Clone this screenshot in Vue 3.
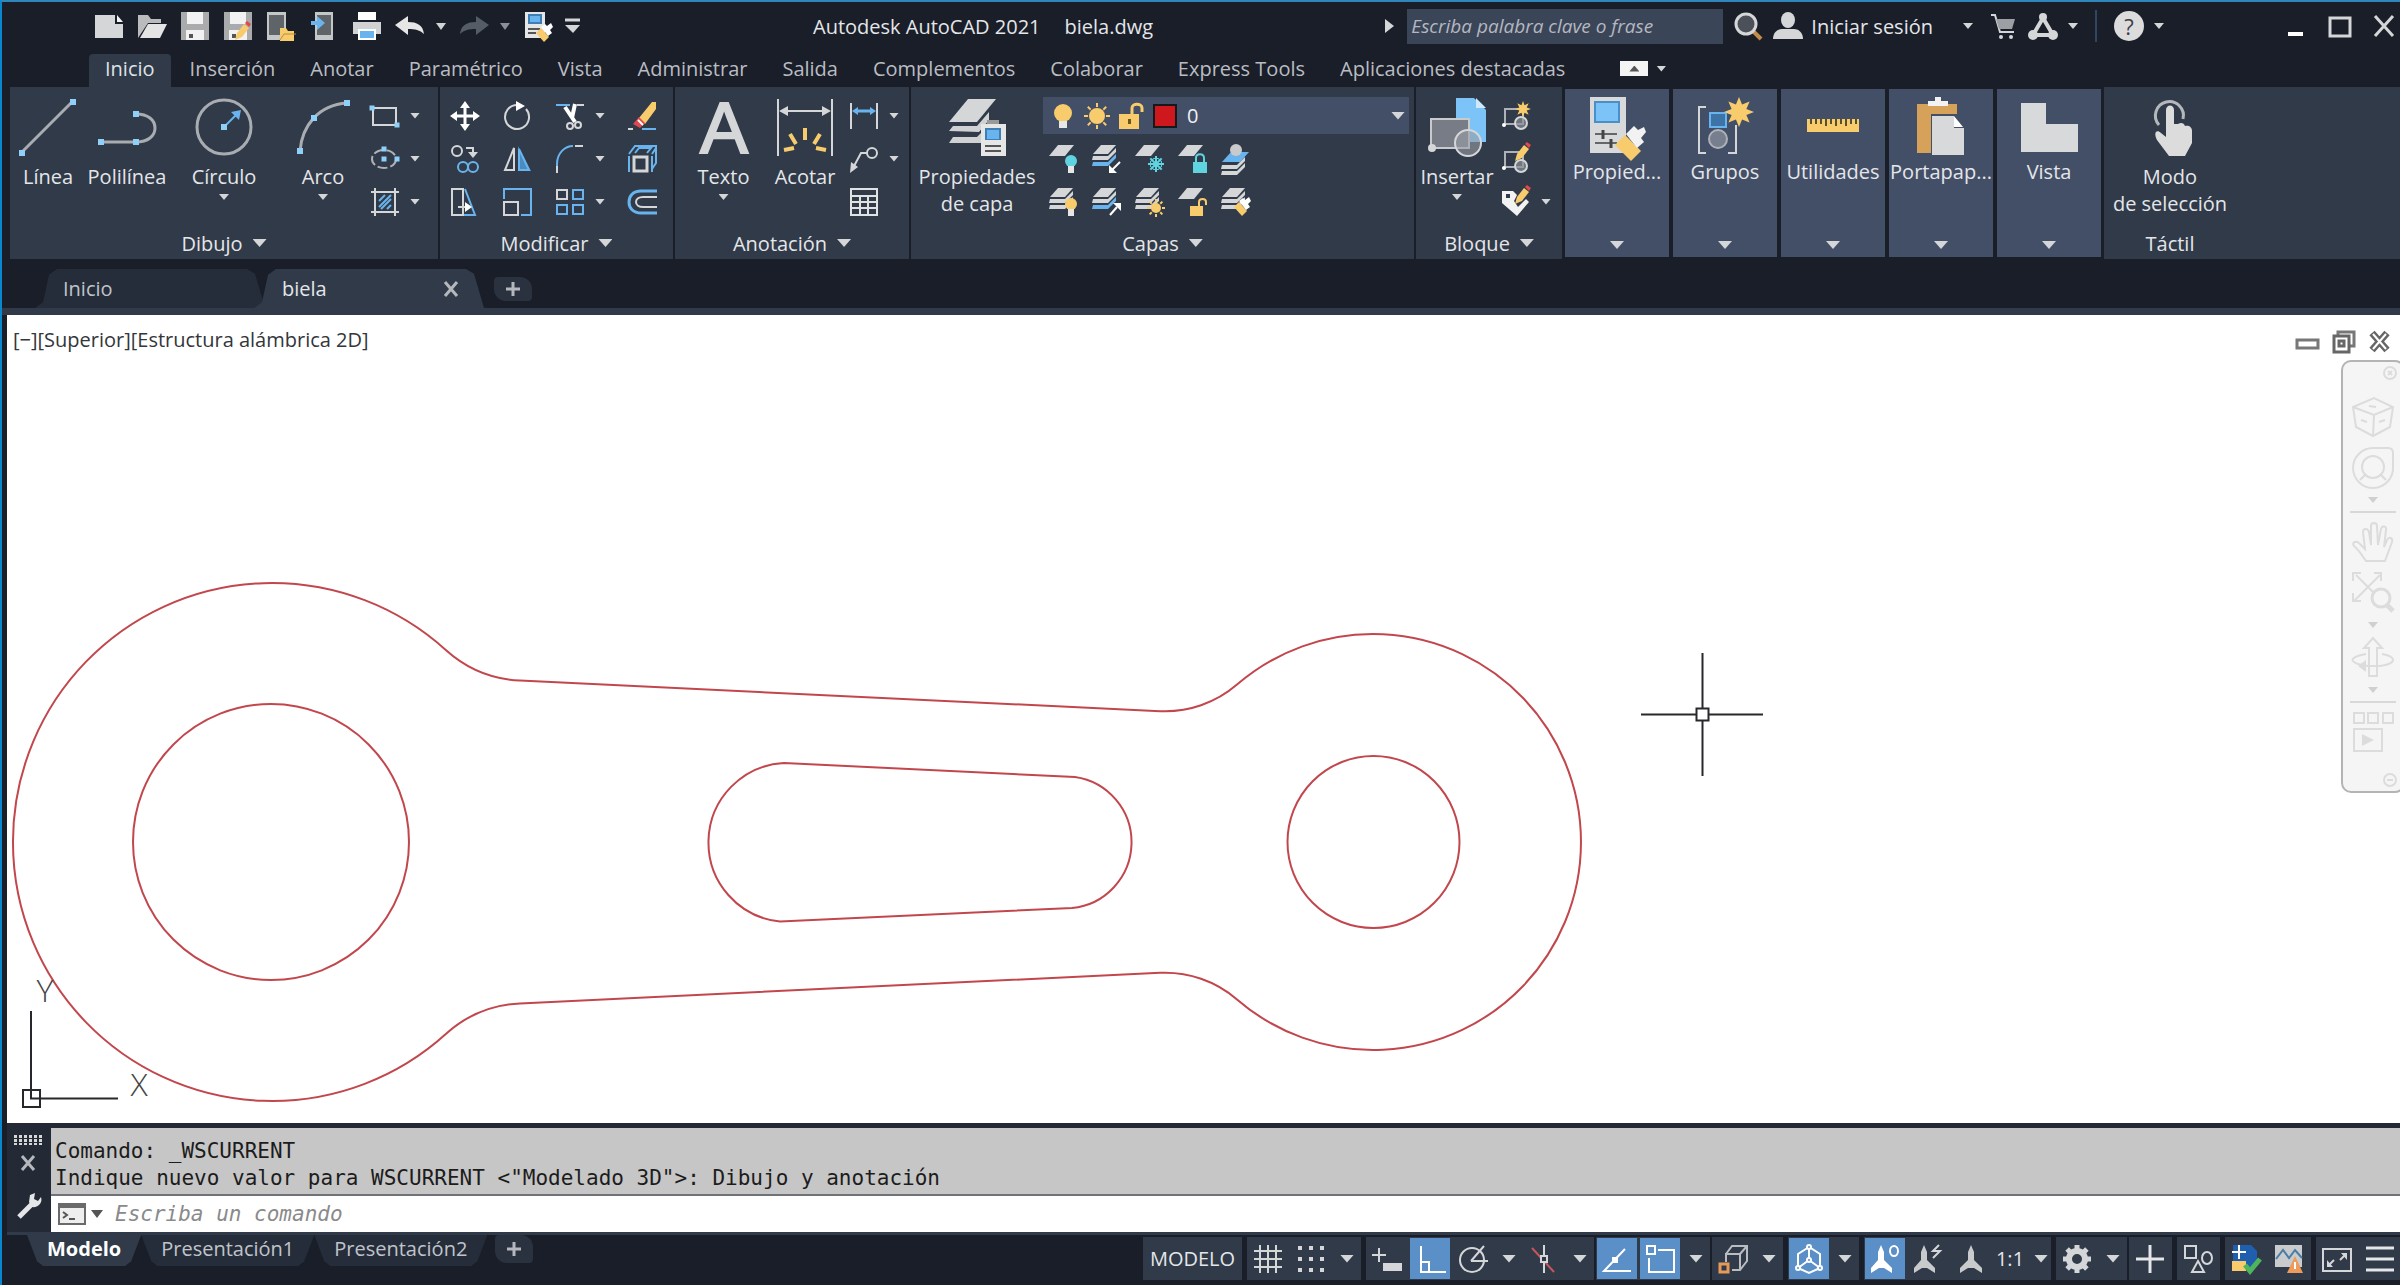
<template>
  <div class="cad">
    <header class="titlebar">
      <div class="qat">
        <button v-for="q in quickAccess" :key="q.icon" :class="q.cls" :aria-label="q.label">
          <Icon :name="q.icon" :size="q.cls === 'menu' ? 14 : 30" />
        </button>
      </div>
      <h1 class="title"><span>Autodesk AutoCAD 2021</span><span>biela.dwg</span></h1>
      <div class="infocenter">
        <Icon name="play" :size="14" />
        <input class="search" type="text" aria-label="Buscar" placeholder="Escriba palabra clave o frase">
        <button aria-label="Buscar ayuda"><Icon name="search" :size="30" /></button>
        <button class="login"><Icon name="user" :size="30" /><span>Iniciar sesión</span><i class="caret"></i></button>
        <button aria-label="Tienda"><Icon name="cart" :size="30" /></button>
        <button class="with-caret" aria-label="Autodesk App Store"><Icon name="apps" :size="30" /><i class="caret"></i></button>
        <span class="divider"></span>
        <button class="with-caret" aria-label="Ayuda"><span class="help">?</span><i class="caret"></i></button>
      </div>
      <div class="window-btns">
        <button aria-label="Minimizar"><Icon name="winMin" :size="24" /></button>
        <button aria-label="Maximizar"><Icon name="winMax" :size="24" /></button>
        <button aria-label="Cerrar"><Icon name="winClose" :size="24" /></button>
      </div>
    </header>

    <nav class="ribbon-tabs">
      <button
        v-for="tab in ribbonTabs"
        :key="tab"
        :class="{ active: tab === activeTab }"
        @click="activeTab = tab"
      >{{ tab }}</button>
      <button class="collapse" aria-label="Minimizar cinta"><span class="collapse-box"></span><i class="caret"></i></button>
    </nav>

    <main class="ribbon">
      <section v-for="p in panels" :key="p.title" :class="['panel', p.cls]">
        <div class="panel-body">
          <button v-for="t in p.big" :key="t.label" class="big-tool">
            <Icon :name="t.icon" :size="58" />
            <span>{{ t.label }}</span>
            <i v-if="t.more" class="caret"></i>
          </button>
          <div v-if="p.small" class="small-tools">
            <button v-for="s in p.small" :key="s" class="small-tool" :aria-label="s">
              <Icon :name="s" :size="30" />
              <i v-if="withMenu.includes(s)" class="caret"></i>
            </button>
          </div>
          <div v-if="p.layers" class="layers">
            <div class="layer-combo">
              <Icon name="bulb" :size="28" />
              <Icon name="sun" :size="28" />
              <Icon name="unlock" :size="28" />
              <span class="swatch"></span>
              <select v-model="layer" aria-label="Capa actual"><option>0</option></select>
              <i class="caret wide"></i>
            </div>
            <div class="layer-tools">
              <button v-for="l in p.layers" :key="l" class="small-tool" :aria-label="l">
                <Icon :name="l" :size="30" />
              </button>
            </div>
          </div>
        </div>
        <h2 class="panel-title">{{ p.title }}<i class="caret wide"></i></h2>
      </section>

      <button v-for="c in collapsed" :key="c.label" class="folded">
        <Icon :name="c.icon" :size="58" />
        <span>{{ c.label }}</span>
        <i class="caret wide"></i>
      </button>

      <section class="panel touch">
        <div class="panel-body">
          <button class="big-tool">
            <Icon name="hand" :size="58" />
            <span>Modo<br>de selección</span>
          </button>
        </div>
        <h2 class="panel-title">Táctil</h2>
      </section>
    </main>

    <div class="file-tabs">
      <button class="file-tab">Inicio</button>
      <button class="file-tab current">biela<Icon name="close" :size="16" /></button>
      <button class="new-tab" aria-label="Nuevo dibujo"><Icon name="plus" :size="16" /></button>
    </div>

    <section class="canvas">
      <svg class="drawing" viewBox="7 315 2393 808" preserveAspectRatio="xMinYMin meet">
        <g class="part">
          <path d="M445.8 650A119 119 0 0 0 520 680.6L1160 711.2A110 110 0 0 0 1237 684.6A208 208 0 1 1 1237 999.4A110 110 0 0 0 1160 972.8L520 1003.4A119 119 0 0 0 445.8 1034A259 259 0 1 1 445.8 650Z" />
          <circle cx="271" cy="842" r="138" />
          <circle cx="1373.500" cy="842" r="86" />
          <path d="M784 763L1075 777A66 66 0 0 1 1072 908L780 921.500A79.500 79.500 0 0 1 784 763Z" />
        </g>
        <g class="ucs">
          <path d="M31 1011V1098.500H118M23 1090h17v17h-17z" />
          <text x="45" y="1002">Y</text>
          <text x="139" y="1096">X</text>
        </g>
        <g class="cross">
          <path d="M1641 714.500H1696M1708 714.500H1763M1702.500 653V708M1702.500 720V776M1696.500 708.500h12v12h-12z" />
        </g>
      </svg>
      <p class="viewport-label">[−][Superior][Estructura alámbrica 2D]</p>
      <div class="viewport-btns">
        <button aria-label="Minimizar vista"><Icon name="vpMin" :size="24" /></button>
        <button aria-label="Restaurar vista"><Icon name="vpMax" :size="24" /></button>
        <button aria-label="Cerrar vista"><Icon name="vpClose" :size="24" /></button>
      </div>
      <div class="navbar">
        <Icon class="nav-corner" name="navX" :size="14" />
        <button aria-label="ViewCube"><Icon name="navCube" :size="42" /></button>
        <button aria-label="Rueda de navegación"><Icon name="navWheel" :size="42" /><i class="caret"></i></button>
        <hr>
        <button aria-label="Encuadre"><Icon name="navPan" :size="42" /></button>
        <button aria-label="Zoom"><Icon name="navZoom" :size="42" /><i class="caret"></i></button>
        <button aria-label="Órbita"><Icon name="navOrbit" :size="42" /><i class="caret"></i></button>
        <hr>
        <button aria-label="ShowMotion"><Icon name="navMotion" :size="42" /></button>
        <Icon class="nav-corner last" name="navMinus" :size="14" />
      </div>
    </section>

    <section class="command">
      <div class="command-side">
        <span class="grip"></span>
        <button aria-label="Cerrar línea de comandos"><Icon name="close" :size="18" /></button>
        <button aria-label="Personalizar"><Icon name="wrench" :size="26" /></button>
      </div>
      <div class="command-main">
        <div class="history">
          <p>Comando: _WSCURRENT</p>
          <p>Indique nuevo valor para WSCURRENT &lt;"Modelado 3D"&gt;: Dibujo y anotación</p>
        </div>
        <label class="prompt">
          <Icon name="prompt" :size="28" />
          <i class="caret"></i>
          <input v-model="command" type="text" aria-label="Comando" placeholder="Escriba un comando">
        </label>
      </div>
    </section>

    <footer class="statusbar">
      <div class="layout-tabs">
        <button class="layout-tab current">Modelo</button>
        <button class="layout-tab">Presentación1</button>
        <button class="layout-tab">Presentación2</button>
        <button class="layout-add" aria-label="Nueva presentación"><Icon name="plus" :size="16" /></button>
      </div>
      <div class="status-groups">
        <div class="group"><button class="space">MODELO</button></div>
        <div v-for="(g, i) in statusGroups" :key="i" :class="['group', { tight: g.tight }]">
          <template v-for="s in g.items" :key="s">
            <button v-if="s.startsWith('menu')" class="drop" aria-label="Opciones"><i class="caret"></i></button>
            <button v-else-if="s === 'scale'" class="scale">1:1<i class="caret"></i></button>
            <button v-else :class="['cell', { on: enabled.includes(s) }]" :aria-label="s"><Icon :name="s" :size="30" /></button>
          </template>
        </div>
      </div>
    </footer>
  </div>
</template>

<script setup>
import { ref, h } from "vue";

const G = "#d4d6d8";
const B = "#69b4ee";
const Y = "#f8cb6c";
const R = "#e0484e";
const C = "#5fd3e0";

// Nodo azul de los iconos de dibujo
const dot = (x, y, s = 6) => `<rect x="${x - s / 2}" y="${y - s / 2}" width="${s}" height="${s}" fill="#8fd0f8"/>`;
const line = (d, c = G, w = 2) => `<path d="${d}" fill="none" stroke="${c}" stroke-width="${w}"/>`;
const fill = (d, c = G) => `<path d="${d}" fill="${c}"/>`;
const sheet = (y, c = G) => fill(`M9 ${y}h16l-9 11H0z`, c);
const stripe = (y, c = G) => fill(`M1 ${y}h15l8-8v4l-8 8H0z`, c);
const stack = (c = G) => fill("M9 1h15l-8 9H1z") + stripe(12) + stripe(18, c);
const brush = (x, y) => fill(`M${x} ${y}l5-5 8 9-5 5z`, Y) + fill(`M${x + 5} ${y - 6}l4-3 2 2 4-3 2 4-3 3 2 3-4 3z`, "#fff");
const pencil = (x, y) => fill(`M${x} ${y}l2-7 7-9 5 4-7 9z`, Y) + fill(`M${x + 10} ${y - 17}l2-2 4 3-2 3z`, R);
const rays = (cx, cy, r1, r2, c = Y, w = 2) => {
  let d = "";
  for (let i = 0; i < 8; i++) {
    const a = (i * Math.PI) / 4;
    d += `M${cx + r1 * Math.cos(a)} ${cy + r1 * Math.sin(a)}L${cx + r2 * Math.cos(a)} ${cy + r2 * Math.sin(a)}`;
  }
  return line(d, c, w);
};
const star = (cx, cy, r1, r2, n = 8) => {
  const pts = [];
  for (let i = 0; i < n * 2; i++) {
    const r = i % 2 ? r2 : r1;
    const a = (i * Math.PI) / n - Math.PI / 2;
    pts.push(`${cx + r * Math.cos(a)} ${cy + r * Math.sin(a)}`);
  }
  return fill(`M${pts.join("L")}Z`, Y);
};
const block = line("M4 8h18v15H4z", "#aeb2b8", 2) + `<circle cx="20" cy="22" r="6" fill="#8b9097" fill-opacity=".7" stroke="${G}" stroke-width="2"/><circle cx="3" cy="24" r="2" fill="#fff"/>`;
const floppy = fill("M1 1h28v28H1z", "#a9abad") + fill("M7 1h16v12H7zM6 19h18v10H6z", "#f2f2f2") + fill("M9 23h4v4H9z", "#555");
const person = (c) => fill("M15 1l3 7v8l8 8v5l-8-5h-6l-8 5v-5l8-8V8z", c);
const P = "#dcdcdc";

const icons = {
  new: fill("M1 4h20v9h8v14H1z") + fill("M23 4l6 7h-6z", "#f4f4f4"),
  open: fill("M1 4h10l3 4h10v4H11L1 27z", "#b9bbbd") + fill("M11 13h19l-7 14H3z", "#e4e4e4"),
  save: floppy,
  saveAs: floppy + pencil(12, 29),
  webOpen: fill("M1 1h19v28H1z", "#c4c6c8") + fill("M3 4h15v20H3z", "#5f6469") + fill("M14 17h6l2 3h6v10H14z", Y) + line("M14 29l4-6h12", "#b98f3a", 1),
  webSave: fill("M6 1h18v28H6z", "#c4c6c8") + fill("M8 4h14v20H8z", "#5f6469") + fill("M2 10h6V5l8 7-8 7v-5H2z", B),
  print: fill("M6 1h18v8H6z", "#fff") + fill("M1 11h28v12H1z", "#d0d2d4") + fill("M6 18h18v11H6z", "#fff") + fill("M8 20h14v7H8z", B),
  undo: fill("M0 14L13 5v6c9 0 15 3 16 12-4-4-9-5-16-5v6z", "#e6e6e6"),
  redo: fill("M30 14L17 5v6c-9 0-15 3-16 12 4-4 9-5 16-5v6z", "#555c66"),
  menuA: fill("M2 4h10l-5 7z", "#d0d2d4"),
  menuB: fill("M2 4h10l-5 7z", "#8b9097"),
  match: fill("M2 1h20v26H2z", "#e6e6e6") + fill("M5 3h14v10H5z", "#3d7fb5") + fill("M7 5h10v6H7z", B) + line("M5 18h12M5 22h8", "#555", 2) + brush(13, 22),
  custom: line("M8 9h15", G, 3) + fill("M8 14h15l-7 8z"),
  play: fill("M2 0l9 7-9 7z"),
  search: line("M20 20l8 8", "#c48c4a", 4) + `<circle cx="13" cy="13" r="10" fill="#4b5059" stroke="${G}" stroke-width="3"/>`,
  user: `<ellipse cx="15" cy="9" rx="7" ry="8" fill="${G}"/>` + fill("M0 28c0-7 5-10 9-10h12c4 0 9 3 9 10z"),
  cart: line("M3 4h4l5 17h14", G, 2) + fill("M8 8h19l-3 10H11z", "#9c9fa3") + `<circle cx="13" cy="26" r="2" fill="${G}"/><circle cx="23" cy="26" r="2" fill="${G}"/>`,
  apps: line("M15 7L5 24h20z", G, 4) + `<circle cx="15" cy="6" r="4" fill="${G}"/><circle cx="5" cy="24" r="5" fill="${G}"/><circle cx="25" cy="24" r="5" fill="${G}"/>`,
  winMin: line("M4 20h15", "#fff", 4),
  winMax: line("M2 4h20v18H2z", G, 3),
  winClose: line("M3 2l18 20M21 2L3 22", G, 3),

  line: line("M3 54L53 4", "#a9adb2", 3) + dot(3, 55) + dot(54, 4),
  polyline: line("M3 44h35c12 0 19-6 19-14s-7-14-19-14", "#a9adb2", 3) + dot(3, 44) + dot(38, 44) + dot(38, 16),
  circle: `<circle cx="29" cy="29" r="27" fill="none" stroke="#a9adb2" stroke-width="3"/>` + line("M29 29L43 15", B, 2) + fill("M46 12l-2 10-8-8z", B) + dot(29, 29),
  arc: line("M6 53C8 28 24 7 53 5", "#a9adb2", 3) + dot(6, 53) + dot(20, 20) + dot(53, 5),
  rect: line("M3 7h23v17H3z") + dot(2, 7, 5) + dot(27, 24, 5),
  ellipse: `<ellipse cx="14" cy="15" rx="12" ry="9" fill="none" stroke="#aeb2b8" stroke-width="2" stroke-dasharray="10 3"/>` + dot(14, 5, 5) + dot(14, 15, 5) + dot(27, 15, 5),
  hatch: line("M5 1v28M25 1v28M1 5h28M1 25h28") + line("M9 14l6-6M9 20L21 8M11 22l10-10M17 22l4-4", B, 2),

  move: line("M15 4v22M4 15h22", "#fff", 3) + fill("M15 0l5 7H10zM15 30l5-7H10zM0 15l7-5v10zM30 15l-7-5v10z", "#fff"),
  rotate: line("M24 8a12 12 0 1 1-9-4", G, 2) + fill("M14 0l9 5-9 5z", "#fff"),
  trim: line("M1 4h14", B, 2) + line("M22 4h7") + line("M10 6l10 15M20 3l-3 14", "#fff", 4) + `<circle cx="15" cy="25" r="3" fill="none" stroke="${G}" stroke-width="2"/><circle cx="23" cy="24" r="3" fill="none" stroke="${G}" stroke-width="2"/>`,
  erase: fill("M12 17L25 1h4v7L18 23z", Y) + fill("M12 16l6 6-5 5-7-4z", R) + line("M11 19l5 5", "#fff", 2) + line("M1 28h5") + line("M15 28h14", B),
  copy: `<circle cx="7" cy="7" r="5" fill="none" stroke="${G}" stroke-width="2"/>` + line("M16 4h7v7") + fill("M18 8h10l-5 6z") + `<g fill="none" stroke="${B}" stroke-width="2"><circle cx="13" cy="23" r="5"/><circle cx="23" cy="23" r="5"/></g>`,
  mirror: line("M12 4v22H3z") + fill("M16 2l13 25H16z", "#4a8cc0") + line("M17 5l10 21H17z", B),
  fillet: line("M2 22v7M20 2h8") + line("M2 22V20C2 9 10 2 18 2", B, 2),
  explode: line("M7 13h13v14H7z", G, 3) + line("M2 12v16M25 12v16M2 10l6-8h21v17l-4 6M8 9l4-5h12l-4 5M25 10l4-6", B, 2),
  stretch: line("M2 2h11v26H2z") + line("M15 2l10 26H14", B) + line("M8 20h10") + fill("M15 15l7 5-7 5z", "#fff"),
  scaleTool: line("M2 15h14v13H2z") + line("M2 12V2h27v26H19", B),
  array: line("M2 3h10v9H2z") + line("M18 3h10v9H18zM2 18h10v9H2zM18 18h10v9H18z", B),
  offset: line("M30 4H14C6 4 2 9 2 15s4 11 12 11h16", B, 3) + line("M30 10H16c-4 0-7 2-7 5s3 5 7 5h14"),

  text: `<text x="29" y="55" text-anchor="middle" font-size="72" font-family="Liberation Sans, sans-serif" fill="${G}" stroke="${G}" stroke-width="2">A</text>`,
  dim: line("M2 1v57M56 1v57", G, 2) + line("M8 13h42") + fill("M3 13l9-5v10zM55 13l-9-5v10z") + line("M29 30v12M14 36l6 10M44 36l-6 10M8 52l10-2M50 52l-10-2", Y, 4),
  linear: line("M2 2v26M28 2v26") + line("M6 10h18", B, 3) + fill("M3 10l6-4v8zM27 10l-6-4v8z", B),
  leader: `<circle cx="23" cy="9" r="5" fill="none" stroke="${G}" stroke-width="2"/>` + line("M18 9h-6L4 24") + fill("M1 29l1-11 7 5z"),
  table: line("M2 2h26v26H2zM2 9h26M2 15h26M2 21h26M11 9v19M19 9v19", "#e0e2e4", 2),

  layerProps: fill("M20 1h28L29 24H1z") + fill("M1 33l4-5h24l12-14v8L31 34zM1 45l4-6h24l4-4v10z", "#cfd1d3") + fill("M33 26h25v32H33z", "#e6e6e6") + fill("M37 30h16v12H37z", "#3d7fb5") + fill("M39 32h12v9H39z", B) + line("M37 48h16M37 53h16", "#555", 2) + fill("M39 22h12v4H39z", "#999"),
  layOff: sheet(1) + `<circle cx="22" cy="17" r="6" fill="${C}"/>` + fill("M19 22h6v7h-6z", "#e6e6e6"),
  layIso: stack(B) + line("M28 18l-8 8", "#fff", 2) + fill("M17 29v-8l8 8z", "#fff"),
  layFreeze: sheet(1) + rays(21, 20, 0, 8, C, 2) + rays(21, 20, 5, 6, C, 5),
  layLock: sheet(1) + fill("M15 18h14v11H15z", C) + line("M18 18v-4c0-5 8-5 8 0v4", C, 2),
  layCurrent: fill("M10 8h18L19 18H1z", B) + stripe(21) + stripe(27) + `<circle cx="15" cy="6" r="6" fill="#c8cacc"/>`,
  layOn: stack() + `<circle cx="22" cy="17" r="6" fill="${Y}"/>` + fill("M19 22h6v7h-6z", "#e6e6e6"),
  layUniso: stack(B) + line("M18 28l7-8", "#fff", 2) + fill("M29 16v8l-8-8z", "#fff"),
  layThaw: stack() + `<circle cx="21" cy="21" r="5" fill="${Y}"/>` + rays(21, 21, 6, 9),
  layUnlock: sheet(1) + fill("M12 19h13v10H12z", Y) + line("M21 19v-4c0-4 7-4 7 0v3", Y, 2),
  layMatch: stack() + brush(13, 20),
  bulb: `<circle cx="14" cy="11" r="9" fill="${Y}"/>` + fill("M10 19h8v7h-8z", "#e6e6e6"),
  sun: `<circle cx="14" cy="14" r="8" fill="${Y}"/>` + rays(14, 14, 9, 13),
  unlock: fill("M2 12h20v15H2z", Y) + line("M15 12V6c0-5 10-5 10 0v4", Y, 3) + fill("M11 17h3v5h-3z", "#6b5520"),

  insert: fill("M28 0h18l12 12v32H28z", "#7cc4f8") + fill("M48 0l10 10H48z", "#cfe8fb") + fill("M3 21h38v29H3z", "#777c86") + line("M3 21h38v29H3z", "#c8cacc", 2) + `<circle cx="40" cy="45" r="13" fill="#9a9fa6" fill-opacity=".6" stroke="${G}" stroke-width="2"/><circle cx="4" cy="50" r="4" fill="#d4d6d8"/>`,
  blockNew: block + star(22, 8, 8, 4),
  blockEdit: block + pencil(14, 17),
  attrEdit: fill("M1 4h11l4 4-3 6 4 6 8-8 3 3-12 14L1 16z", "#f2f2f2") + fill("M5 7h4v4H5z", "#303a48") + pencil(14, 17),

  props: fill("M2 0h36v56H2z", "#d8d9da") + fill("M6 4h26v22H6z", "#4a90c8") + fill("M8 6h22v18H8z", "#7cc4f8") + line("M7 37h22M7 46h22", "#666", 2) + line("M15 33v9M23 42v9", "#444", 3) + fill("M27 48l10-10 16 16-10 10z", Y) + fill("M38 37l8-8 4 4 6-3 2 5-5 6 3 4-7 6z", "#f2f2f2"),
  groups: line("M10 10H3v46h7M32 56h8V28", G, 2) + fill("M14 16h16v14H14z", "#3d73a5") + line("M14 16h16v14H14z", B, 2) + `<circle cx="22" cy="42" r="9" fill="#777f8f" stroke="#aeb2b8" stroke-width="2"/>` + star(43, 15, 15, 8),
  ruler: fill("M3 22h52v13H3z", Y) + line("M7 22v5M12 22v5M17 22v5M22 22v7M27 22v5M32 22v7M37 22v5M42 22v7M47 22v5M52 22v5", "#55512f", 2),
  clipboard: fill("M5 7h40v49H5z", "#d6a159") + fill("M19 17h30v41H19z", "#434f67") + fill("M20 19h22v12h10v27H20z", "#d8d9da") + fill("M42 19l9 11h-9z", "#fff") + fill("M16 4h7V0h6v4h7v5H16z", "#f2f2f2"),
  view: fill("M1 6h25v21h32v28H1z", "#d8d9da"),
  hand: line("M18 27a14 14 0 1 1 24-6", "#b4b8bc", 3) + fill("M25 12c0-6 8-6 8 0v14h4c3-2 6-1 7 2 4-1 7 1 7 5v12l-7 13H28L16 42c-4-8 0-11 4-7l5 4z", "#dcdcdc"),

  close: line("M2 1l12 14M14 1L2 15", "#b4b8bd", 3),
  plus: line("M8 1v14M1 8h14", "#b4b8bd", 3),

  vpMin: line("M1 10h21v8H1z", "#777", 3),
  vpMax: line("M6 5V2h16v14h-4", "#777", 3) + line("M2 6h15v16H2zM7 11h5v5H7z", "#666", 3),
  vpClose: line("M4 3l15 17M19 3L4 20", "#666", 7) + line("M5 4l13 15M18 4L5 19", "#fff", 2),
  navX: `<circle cx="7" cy="7" r="6" fill="none" stroke="${P}" stroke-width="2"/>` + line("M5 5l4 4M9 5l-4 4", P),
  navMinus: `<circle cx="7" cy="7" r="6" fill="none" stroke="${P}" stroke-width="2"/>` + line("M4 7h6", P),
  navCube: line("M1 11L22 2l19 9-3 20-17 9L4 31zM1 11l21 8 19-8M22 19l-1 21M17 10l7 1M9 24l6 2M27 26l6-2", P, 2),
  navWheel: line("M21 2h15q5 0 5 5v14a20 20 0 1 1-20-19zM8 34l6-6M34 34l-6-6", P, 2) + `<circle cx="21" cy="21" r="11" fill="none" stroke="${P}" stroke-width="2"/>`,
  navPan: line("M14 40C10 34 6 28 2 25c-3-4 3-6 6-2l5 5-2-17c0-4 5-4 6 0l2 13V5c0-4 6-4 6 0l1 19 3-16c1-4 6-3 5 1l-2 17 3-7c2-4 6-2 5 2l-7 19z", P, 2),
  navZoom: line("M4 4l24 24M28 4L2 30M1 10V2h8M22 2h7v8M1 22v8h8", P, 2) + `<circle cx="29" cy="27" r="9" fill="#f5f5f5" stroke="${P}" stroke-width="3"/>` + line("M35 34l6 6", P, 5),
  navOrbit: line("M17 40V12h-5l9-10 9 10h-5v28zM14 18C-8 22 0 28 16 30h12c20-3 14-10 2-12", P, 2) + fill("M6 30l8-6v12z", P),
  navMotion: line("M2 2h10v10H2zM16 2h10v10H16zM31 2h10v10H31zM2 18h28v22H2z", P, 2) + fill("M10 23l12 6-12 6z", P),

  wrench: line("M3 24l13-13", "#e4e6e8", 5) + fill("M13 9l1-7 5-2-1 6 4 2 3-4c2 6-3 11-9 10z", "#e4e6e8"),
  prompt: fill("M0 3h28v22H0z", "#6a6a6a") + fill("M2 8h24v15H2z", "#eee") + line("M5 12l4 3-4 3M11 19h6", "#555", 2),

  grid: line("M7 1v28M15 1v28M23 1v28M1 7h28M1 15h28M1 23h28"),
  snap: [4, 15, 26].map((y) => [4, 15, 26].map((x) => `<rect x="${x - 2}" y="${y - 2}" width="4" height="4" fill="${G}"/>`).join("")).join(""),
  infer: line("M7 4v14M0 11h14") + fill("M11 19h19v8H11z"),
  ortho: line("M6 2v26h25M6 18h8v9", "#fff", 2),
  polar: `<circle cx="14" cy="16" r="12" fill="none" stroke="${G}" stroke-width="2"/>` + line("M13 17L26 2M13 17h17"),
  iso: line("M3 4l22 24", "#c6565e", 2) + line("M15 1v28") + `<rect x="12" y="12" width="6" height="6" fill="#303a48" stroke="${G}" stroke-width="2"/>`,
  track: line("M23 5L2 27h27", "#fff", 2) + `<rect x="10" y="13" width="6" height="6" fill="#fff"/>`,
  osnap: line("M2 2h8v8H2zM13 6h16v22H4V14", "#fff", 2),
  cube3d: line("M8 10L14 2h15v15l-7 9h-8M8 18v-8h14v16M22 10l7-8", "#b9bdc2") + line("M2 20h8v8H2z", "#e69a58", 3),
  isoObj: line("M15 3L4 10v14l11 5 11-5V10zM15 3v13L4 24M15 16l11 8", "#fff", 2) + [[15, 3], [4, 24], [26, 24], [15, 16]].map(([x, y]) => `<circle cx="${x}" cy="${y}" r="2" fill="#5a8fc7" stroke="#fff" stroke-width="2"/>`).join(""),
  annoVis: fill("M11 1l3 7v8l8 8v5l-8-5H9l-8 5v-5l7-8V8z", "#fff") + `<ellipse cx="24" cy="7" rx="4" ry="5" fill="none" stroke="#fff" stroke-width="2"/>`,
  annoAuto: fill("M11 1l3 7v8l8 8v5l-8-5H9l-8 5v-5l7-8V8z", "#c8cacc") + line("M26 1l-6 6h7l-7 7", G, 2),
  anno: person("#c8cacc"),
  gear: `<circle cx="15" cy="15" r="8" fill="none" stroke="${G}" stroke-width="6"/>` + rays(15, 15, 9, 14, G, 5),
  add: line("M15 1v28M1 15h28", "#e4e6e8", 3),
  shapes: line("M2 2h11v12H2zM9 28l6-11 6 11z") + `<ellipse cx="24" cy="14" rx="5" ry="6" fill="none" stroke="${G}" stroke-width="2"/>`,
  license: fill("M2 1h18l6 6v16H2z", "#1f5fae") + line("M8 1v14M1 8h14", "#fff") + fill("M1 17h14v10H1z", Y) + line("M14 21l5 6L29 15", "#4fb45c", 5),
  perf: fill("M1 1h27v22H1z", "#c9cbcd") + line("M2 15l7-9 6 8 6-8 7 8", "#4a7da5", 2) + fill("M21 12l8 17H13z", "#ee9a5a") + fill("M20 18h2v7h-2z", "#fff"),
  full: line("M1 5h28v22H1z") + line("M6 22l6-6M24 10l-6 6") + fill("M5 23v-7l6 7zM25 9v7l-6-7z"),
  burger: line("M1 4h28M1 15h28M1 26h28", "#e4e6e8", 3),
};

const Icon = (props) =>
  h("svg", {
    viewBox: `0 0 ${props.size} ${props.size}`,
    width: props.size,
    height: props.size,
    "aria-hidden": "true",
    innerHTML: icons[props.name],
  });
Icon.props = ["name", "size"];

const activeTab = ref("Inicio");
const layer = ref("0");
const command = ref("");

const quickAccess = [
  { icon: "new", label: "Nuevo" },
  { icon: "open", label: "Abrir" },
  { icon: "save", label: "Guardar" },
  { icon: "saveAs", label: "Guardar como" },
  { icon: "webOpen", label: "Abrir desde web" },
  { icon: "webSave", label: "Guardar en web" },
  { icon: "print", label: "Trazar" },
  { icon: "undo", label: "Deshacer" },
  { icon: "menuA", label: "Historial deshacer", cls: "menu" },
  { icon: "redo", label: "Rehacer" },
  { icon: "menuB", label: "Historial rehacer", cls: "menu" },
  { icon: "match", label: "Igualar propiedades" },
  { icon: "custom", label: "Personalizar", cls: "custom" },
];

const ribbonTabs = [
  "Inicio", "Inserción", "Anotar", "Paramétrico", "Vista", "Administrar", "Salida",
  "Complementos", "Colaborar", "Express Tools", "Aplicaciones destacadas",
];

// Herramientas pequeñas que llevan menú desplegable
const withMenu = ["rect", "ellipse", "hatch", "trim", "fillet", "array", "linear", "leader", "attrEdit"];

const panels = [
  {
    title: "Dibujo",
    cls: "draw",
    big: [
      { icon: "line", label: "Línea" },
      { icon: "polyline", label: "Polilínea" },
      { icon: "circle", label: "Círculo", more: true },
      { icon: "arc", label: "Arco", more: true },
    ],
    small: ["rect", "ellipse", "hatch"],
  },
  {
    title: "Modificar",
    cls: "modify",
    small: ["move", "rotate", "trim", "erase", "copy", "mirror", "fillet", "explode", "stretch", "scaleTool", "array", "offset"],
  },
  {
    title: "Anotación",
    cls: "annotate",
    big: [
      { icon: "text", label: "Texto", more: true },
      { icon: "dim", label: "Acotar" },
    ],
    small: ["linear", "leader", "table"],
  },
  {
    title: "Capas",
    cls: "layer-panel",
    big: [{ icon: "layerProps", label: "Propiedades de capa" }],
    layers: ["layOff", "layIso", "layFreeze", "layLock", "layCurrent", "layOn", "layUniso", "layThaw", "layUnlock", "layMatch"],
  },
  {
    title: "Bloque",
    cls: "block",
    big: [{ icon: "insert", label: "Insertar", more: true }],
    small: ["blockNew", "blockEdit", "attrEdit"],
  },
];

const collapsed = [
  { icon: "props", label: "Propied..." },
  { icon: "groups", label: "Grupos" },
  { icon: "ruler", label: "Utilidades" },
  { icon: "clipboard", label: "Portapap..." },
  { icon: "view", label: "Vista" },
];

const enabled = ["ortho", "track", "osnap", "isoObj", "annoVis"];
const statusGroups = [
  { items: ["grid", "snap", "menu1"] },
  { items: ["infer", "ortho", "polar", "menu1", "iso", "menu2"] },
  { items: ["track", "osnap", "menu1"], tight: true },
  { items: ["cube3d", "menu1"], tight: true },
  { items: ["isoObj", "menu1"] },
  { items: ["annoVis", "annoAuto", "anno", "scale"] },
  { items: ["gear", "menu1"] },
  { items: ["add"], tight: true },
  { items: ["shapes"] },
  { items: ["license", "perf"] },
  { items: ["full", "burger"] },
];
</script>

<style>
body{
  background:#191e28;
}
</style>

<style scoped>
.cad{
  min-height:100vh;
  box-sizing:border-box;
  display:flex;
  flex-direction:column;
  border-top:2px solid #2f86bb;
  border-left:2px solid #0a86cf;
  background:#191e28;
  color:#e4e6e9;
  font-family:"Open Sans","Noto Sans",sans-serif;
  font-size:20px;
  line-height:27px;
  overflow:hidden;
}
button{
  display:flex;
  align-items:center;
  padding:0;
  border:0;
  background:none;
  color:inherit;
  font:inherit;
  white-space:nowrap;
}
input,select{
  box-sizing:border-box;
  border:0;
  outline:0;
  font:inherit;
}
h1,h2,p{
  margin:0;
  font-size:20px;
  font-weight:400;
}
svg{
  display:block;
  flex:none;
  overflow:visible;
}
.caret{
  flex:none;
  width:10px;
  height:6px;
  background:#d4d6d8;
  clip-path:polygon(0 0,100% 0,50% 100%);
}
.caret.wide{
  width:14px;
  height:8px;
}

/* Barra de título */
.titlebar{
  height:52px;
  display:flex;
  align-items:center;
  padding:0 4px 4px 92px;
  box-sizing:border-box;
}
.qat{
  display:flex;
  gap:13px;
}
.qat .menu{
  margin:0 -2px 0 -4px;
}
.qat .custom{
  margin-left:-9px;
}
.title{
  display:flex;
  gap:24px;
  margin-left:226px;
}
.infocenter{
  display:flex;
  align-items:center;
  margin-left:auto;
  gap:10px;
}
.search{
  width:316px;
  height:35px;
  padding:0 4px;
  background:#3b4558;
  color:#c8ccd2;
  font-size:19px;
  font-style:italic;
}
.search::placeholder{
  color:#b4b8c0;
  opacity:1;
}
.login{
  gap:8px;
}
.login .caret{
  margin:0 5px 0 22px;
}
.with-caret{
  gap:10px;
}
.divider{
  width:2px;
  height:32px;
  margin:0 7px;
  background:#2f4560;
}
.help{
  width:30px;
  height:30px;
  border-radius:50%;
  background:#dcdcdc;
  color:#3c4048;
  font-size:22px;
  line-height:30px;
  text-align:center;
}
.window-btns{
  display:flex;
  gap:20px;
  margin-left:120px;
}

/* Fichas de la cinta */
.ribbon-tabs{
  display:flex;
  gap:3px;
  padding-left:87px;
}
.ribbon-tabs button{
  height:33px;
  padding:0 16px 4px;
  border-radius:4px 4px 0 0;
  color:#b9bdc3;
}
.ribbon-tabs .active{
  background:#303a48;
  color:#dfe2e6;
}
.ribbon-tabs .collapse{
  gap:8px;
  margin-left:20px;
}
.collapse-box{
  width:28px;
  height:15px;
  background:#f4f4f4;
  display:flex;
  align-items:center;
  justify-content:center;
}
.collapse-box::before{
  content:"";
  width:10px;
  height:6px;
  background:#555;
  clip-path:polygon(50% 0,100% 100%,0 100%);
}

/* Cinta de opciones */
.ribbon{
  display:flex;
  gap:2px;
  padding-left:8px;
  height:172px;
}
.panel{
  flex:none;
  display:flex;
  flex-direction:column;
  background:#303a48;
}
.panel-body{
  flex:1;
  display:grid;
  align-items:start;
}
.panel-title{
  display:flex;
  align-items:center;
  justify-content:center;
  gap:10px;
  height:32px;
}
.draw{
  width:428px;
}
.draw .panel-body{
  grid-template-columns:76px 82px 112px 86px auto;
}
.draw .small-tools{
  padding-left:4px;
}
.modify{
  width:233px;
}
.modify .small-tools{
  grid-template-columns:52px 53px 72px 30px;
  padding-left:10px;
}
.annotate{
  width:234px;
}
.annotate .panel-body{
  grid-template-columns:97px 66px auto;
}
.annotate .small-tools{
  padding-left:11px;
}
.layer-panel{
  width:503px;
}
.layer-panel .panel-body{
  grid-template-columns:132px auto;
}
.block{
  width:146px;
}
.block .panel-body{
  grid-template-columns:82px auto;
}
.block .small-tools{
  padding-left:3px;
}
.big-tool{
  flex-direction:column;
  padding-top:11px;
  text-align:center;
}
.big-tool span{
  margin-top:7px;
  white-space:normal;
}
.big-tool .caret{
  margin-top:4px;
}
.small-tools{
  display:grid;
  grid-auto-rows:43px;
  padding-top:7px;
}
.small-tool{
  gap:10px;
}
.layer-combo{
  display:flex;
  align-items:center;
  gap:6px;
  height:37px;
  width:366px;
  margin-top:10px;
  padding:0 4px 0 6px;
  box-sizing:border-box;
  background:#434f67;
}
.swatch{
  width:20px;
  height:20px;
  margin-left:2px;
  border:2px solid #16181c;
  background:#cf171e;
}
.layer-combo select{
  flex:1;
  padding-left:4px;
  appearance:none;
  background:none;
  color:#f0f1f3;
}
.layer-tools{
  display:grid;
  grid-template-columns:repeat(5,43px);
  grid-auto-rows:43px;
  padding:3px 0 0 6px;
}
.folded{
  flex:none;
  width:104px;
  margin:2px 1px;
  padding:8px 0;
  box-sizing:border-box;
  flex-direction:column;
  background:#434f67;
}
.folded span{
  margin-top:3px;
}
.folded .caret{
  margin-top:auto;
}
.touch{
  flex:1;
}
.touch .panel-body,
.touch .panel-title{
  width:132px;
}

/* Fichas de archivo */
.file-tabs{
  display:flex;
  align-items:flex-end;
  height:56px;
  padding-left:33px;
  border-bottom:7px solid #303a48;
  box-sizing:border-box;
}
.file-tab{
  width:230px;
  height:39px;
  padding:0 25px 0 28px;
  justify-content:space-between;
  background:#252d3a;
  color:#c0c4ca;
  clip-path:polygon(0 100%,8px 85%,14px 15%,22px 0,212px 0,220px 12%,230px 100%);
}
.file-tab.current{
  margin-left:-11px;
  background:#303a48;
  color:#e4e6e9;
}
.new-tab,.layout-add{
  width:38px;
  height:24px;
  justify-content:center;
  background:#2a3240;
  border-radius:4px 12px 4px 12px;
}
.new-tab{
  margin:0 0 7px 10px;
}

/* Área de dibujo */
.canvas{
  position:relative;
  flex:1;
  margin-left:5px;
  background:#fff;
  min-height:400px;
}
.drawing{
  width:100%;
}
.part{
  fill:none;
  stroke:#c2474d;
  stroke-width:2;
}
.ucs path,.cross path{
  fill:none;
  stroke:#26282b;
  stroke-width:2;
}
.ucs text{
  fill:#444;
  font-size:32px;
  font-weight:300;
  text-anchor:middle;
}
.viewport-label{
  position:absolute;
  left:6px;
  top:11px;
  color:#33363a;
}
.viewport-btns{
  position:absolute;
  right:8px;
  top:15px;
  display:flex;
  gap:12px;
}
.navbar{
  position:absolute;
  right:-5px;
  top:45px;
  width:64px;
  height:433px;
  padding:4px 0;
  box-sizing:border-box;
  border:2px solid #b4b4b4;
  border-radius:10px;
  background:#f5f5f5;
  display:flex;
  flex-direction:column;
  align-items:center;
}
.navbar button{
  flex-direction:column;
  margin-top:8px;
}
.navbar .caret{
  margin-top:9px;
  background:#d0d0d0;
}
.navbar hr{
  width:46px;
  height:2px;
  margin:8px 0 0;
  border:0;
  background:#d8d8d8;
}
.nav-corner{
  align-self:flex-end;
  margin:0 6px 8px 0;
}
.nav-corner.last{
  margin:auto 6px 0 0;
}

/* Línea de comandos */
.command{
  display:flex;
  margin-left:5px;
  padding-top:5px;
  background:#232a36;
}
.command-side{
  width:44px;
  display:flex;
  flex-direction:column;
  align-items:center;
  padding-top:7px;
  box-sizing:border-box;
}
.grip{
  width:30px;
  height:10px;
  margin-bottom:10px;
  background:repeating-linear-gradient(90deg,transparent 0 3px,#232a36 3px 5px),repeating-linear-gradient(#d4d6d8 0 3px,#232a36 3px 4px);
}
.command-side button + button{
  margin-top:20px;
}
.command-main{
  flex:1;
  font-family:"DejaVu Sans Mono","Liberation Mono",monospace;
}
.history{
  padding:10px 4px 2px;
  background:#c6c6c6;
  color:#1c1c1c;
  border-bottom:2px solid #6f7277;
}
.history p{
  font-size:21px;
}
.prompt{
  display:flex;
  align-items:center;
  height:36px;
  padding-left:7px;
  background:#fff;
}
.prompt .caret{
  width:12px;
  height:8px;
  margin:0 8px 0 5px;
  background:#555;
}
.prompt input{
  flex:1;
  padding:0 4px;
  background:none;
  font-size:21px;
  font-style:italic;
}
.prompt input::placeholder{
  color:#8a8a8a;
  opacity:1;
}

/* Barra de estado */
.statusbar{
  display:flex;
  justify-content:space-between;
  height:53px;
  box-sizing:border-box;
  margin-left:5px;
  border-top:3px solid #303a48;
}
.layout-tabs{
  display:flex;
  padding-left:20px;
}
.layout-tab{
  height:31px;
  padding:0 20px 4px;
  background:#252d3a;
  color:#c0c4ca;
  clip-path:polygon(0 0,100% 0,calc(100% - 10px) 85%,calc(100% - 16px) 100%,16px 100%,10px 85%);
}
.layout-tab.current{
  background:#303a48;
  color:#fff;
  font-weight:700;
}
.layout-add{
  margin:0 0 0 8px;
  height:28px;
}
.status-groups{
  display:flex;
  gap:5px;
  padding-top:2px;
}
.group{
  display:flex;
  align-items:center;
  height:43px;
  background:#303a48;
}
.group.tight{
  margin-left:-3px;
}
.group:last-child{
  margin-right:-2px;
}
.space{
  width:99px;
  justify-content:center;
}
.cell{
  width:40px;
  height:41px;
  margin:0 2px 0 1px;
  justify-content:center;
}
.cell.on{
  background:#5a8fc7;
}
.drop{
  width:28px;
  height:43px;
  justify-content:center;
}
.drop .caret,.scale .caret{
  width:14px;
  height:8px;
}
.scale{
  width:58px;
  justify-content:center;
  gap:10px;
}
</style>
